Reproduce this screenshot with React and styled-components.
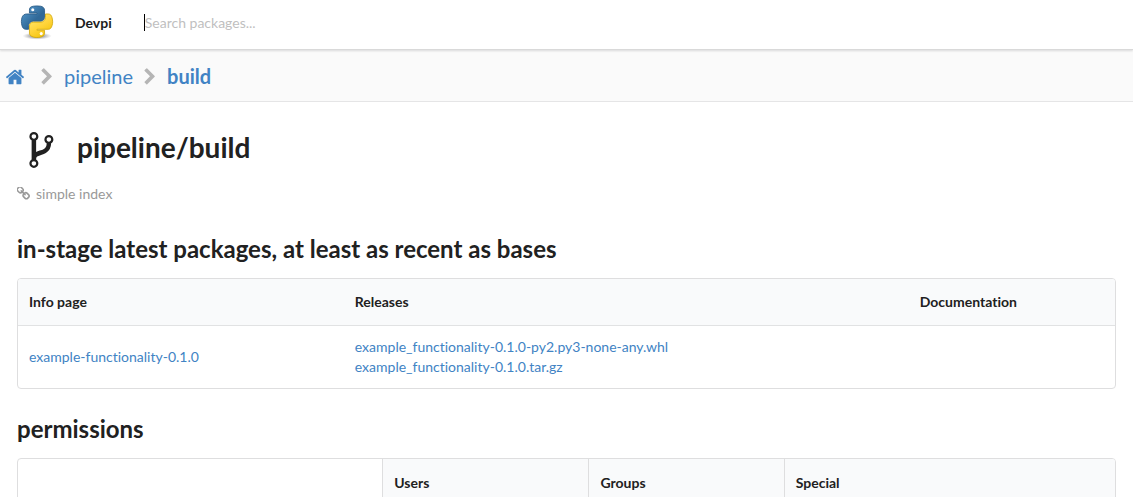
import React from "react";
import styled, { createGlobalStyle } from "styled-components";

const GlobalStyle = createGlobalStyle`
  *, *::before, *::after { box-sizing: border-box; }
  body {
    margin: 0;
    background: #fff;
    color: #212121;
    font-family: Lato, "Liberation Sans", sans-serif;
    font-size: 14px;
    line-height: 20px;
    font-variant-ligatures: none;
  }
  a { color: #4183c4; text-decoration: none; }
`;

const TopBar = styled.header`
  display: flex;
  align-items: center;
  height: 50px;
  padding: 0 20px 4px;
  border-bottom: 1px solid #d9d9d9;
  box-shadow: 0 1px 2px rgba(34, 36, 38, 0.15);
  position: relative;
`;

const Brand = styled.a`
  display: flex;
  align-items: center;
  gap: 21px;
  color: #1b1c1d;
  font-weight: 700;
`;

const Search = styled.form`
  display: flex;
  flex: 1;
  align-items: center;
  margin-left: 32px;
`;

const Caret = styled.span`
  width: 1px;
  height: 17px;
  background: #000;
`;

const SearchInput = styled.input`
  flex: 1;
  min-width: 0;
  padding: 0;
  border: 0;
  outline: 0;
  background: transparent;
  color: #212121;
  font: inherit;
  &::placeholder { color: #bfbfbf; opacity: 1; }
`;

const Breadcrumb = styled.nav`
  display: flex;
  align-items: center;
  height: 52px;
  padding: 0 5px;
  border-bottom: 1px solid #e5e5e6;
  background: #fafafa;
  font-size: 20px;
  line-height: 28px;
`;

const Crumb = styled.a`
  display: flex;
  font-weight: ${({ $current }) => ($current ? 700 : 400)};
`;

const Icon = styled.svg`
  display: block;
  flex: none;
  width: ${({ $size }) => $size}px;
  height: ${({ $size }) => $size}px;
  fill: ${({ $color }) => $color || "currentColor"};
`;

const Divider = styled.span`
  display: flex;
  padding-top: 2px;
  margin: 0 8px 0 ${({ $start }) => $start}px;
`;

const Content = styled.main`
  padding: 24px 17px;
`;

const PageTitle = styled.h1`
  display: flex;
  align-items: center;
  gap: 15px;
  margin: 0;
  padding-left: 3px;
  font-size: 28px;
  line-height: 42px;
`;

const IndexLink = styled.a`
  display: flex;
  align-items: center;
  gap: 4px;
  margin-top: 16px;
  color: #999;
`;

const SectionTitle = styled.h2`
  margin: ${({ $top }) => $top}px 0 14px;
  font-size: 24px;
  line-height: 30px;
`;

const Table = styled.table`
  width: 100%;
  table-layout: fixed;
  border: 1px solid #dededf;
  border-radius: 4px;
  border-collapse: separate;
  border-spacing: 0;
  overflow: hidden;
`;

const Col = styled.col`
  width: ${({ $width }) => $width};
`;

const HeadCell = styled.th`
  padding: 13px 11px;
  border-bottom: 1px solid #e1e2e3;
  background: #f9fafb;
  text-align: left;
  font-weight: 700;
`;

const GridHeadCell = styled(HeadCell)`
  padding-top: 14px;
  border-left: 1px solid #dededf;
`;

const BlankCell = styled.td`
  border-bottom: 1px solid #e1e2e3;
`;

const Cell = styled.td`
  padding: 11px;
  vertical-align: middle;
`;

const FileLink = styled.a`
  display: block;
`;

const HomeIcon = () => (
  <Icon $size={20} viewBox="0 -90 1792 1792" aria-hidden="true">
    <path d="M1472 992v480q0 26-19 45t-45 19h-384v-384h-256v384h-384q-26 0-45-19t-19-45v-480q0-1 .5-3t.5-3l575-474 575 474q1 2 1 6zm223-69l-62 74q-8 9-21 11h-3q-13 0-21-7l-692-577-692 577q-12 8-24 7-13-2-21-11l-62-74q-8-10-7-23.500t11-21.500l719-599q32-26 76-26t76 26l244 204v-195q0-14 9-23t23-9h192q14 0 23 9t9 23v408l219 182q10 8 11 21.500t-7 23.500z" />
  </Icon>
);

const ChevronIcon = () => (
  <Icon $size={18} $color="#b5b5b5" viewBox="0 0 1792 1792" aria-hidden="true">
    <path d="M1363 877l-742 742q-19 19-45 19t-45-19l-166-166q-19-19-19-45t19-45l531-531-531-531q-19-19-19-45t19-45l166-166q19-19 45-19t45 19l742 742q19 19 19 45t-19 45z" />
  </Icon>
);

const ForkIcon = () => (
  <Icon $size={42} viewBox="-16 -124 1792 1792" aria-hidden="true">
    <path d="M672 1472q0-40-28-68t-68-28-68 28-28 68 28 68 68 28 68-28 28-68zm0-1152q0-40-28-68t-68-28-68 28-28 68 28 68 68 28 68-28 28-68zm640 128q0-40-28-68t-68-28-68 28-28 68 28 68 68 28 68-28 28-68zm96 0q0 52-26 96.500t-70 69.500q-2 287-226 414-67 38-203 81-128 40-169.500 71t-41.500 100v26q44 25 70 69.500t26 96.500q0 80-56 136t-136 56-136-56-56-136q0-52 26-96.500t70-69.500v-820q-44-25-70-69.500t-26-96.500q0-80 56-136t136-56 136 56 56 136q0 52-26 96.500t-70 69.500v497q54-26 154-57 55-17 87.500-29.500t70.500-31 59-39.500 40.500-51 28-69.500 8.500-91.500q-44-25-70-69.500t-26-96.500q0-80 56-136t136-56 136 56 56 136z" />
  </Icon>
);

const LinkIcon = () => (
  <Icon $size={15} viewBox="160 140 1792 1792" aria-hidden="true">
    <path d="M1520 1216q0-40-28-68l-208-208q-28-28-68-28-42 0-72 32 3 3 19 18.500t21.500 21.500 15 19 13 25.500 3.500 27.500q0 40-28 68t-68 28q-15 0-27.500-3.500t-25.500-13-19-15-21.500-21.500-18.500-19q-33 31-33 73 0 40 28 68l206 207q27 27 68 27 40 0 68-26l147-146q28-28 28-67zm-703-705q0-40-28-68l-206-207q-28-28-68-28-39 0-68 27l-147 146q-28 28-28 67 0 40 28 68l208 208q27 27 68 27 42 0 72-31-3-3-19-18.500t-21.500-21.500-15-19-13-25.500-3.500-27.500q0-40 28-68t68-28q15 0 27.500 3.500t25.500 13 19 15 21.500 21.500 18.500 19q33-31 33-73zm895 705q0 120-85 203l-147 146q-83 83-203 83-121 0-204-85l-206-207q-83-83-83-203 0-123 88-209l-88-88q-86 88-208 88-120 0-204-84l-208-208q-84-84-84-204t85-203l147-146q83-83 203-83 121 0 204 85l206 207q83 83 83 203 0 123-88 209l88 88q86-88 208-88 120 0 204 84l208 208q84 84 84 204z" />
  </Icon>
);

const PythonLogo = () => (
  <svg width="34" height="35" viewBox="-5 -3 121 124" aria-hidden="true">
    <defs>
      <linearGradient id="blue" x1="0" y1="0" x2="1" y2="1">
        <stop offset="0" stopColor="#5a9fd4" />
        <stop offset="0.6" stopColor="#306998" />
      </linearGradient>
      <linearGradient id="yellow" x1="0.2" y1="0" x2="0.8" y2="1">
        <stop offset="0" stopColor="#ffe873" />
        <stop offset="0.5" stopColor="#ffd43b" />
        <stop offset="1" stopColor="#f0c000" />
      </linearGradient>
      <radialGradient id="shadow">
        <stop offset="0" stopColor="#444" stopOpacity="0.9" />
        <stop offset="0.5" stopColor="#777" stopOpacity="0.55" />
        <stop offset="1" stopColor="#999" stopOpacity="0" />
      </radialGradient>
    </defs>
    <ellipse cx="56" cy="107" rx="52" ry="13" fill="url(#shadow)" />
    <path
      fill="url(#blue)"
      stroke="#2a5a85"
      strokeWidth="3"
      d="M54.918 0.001c-4.589.021-8.971.413-12.827 1.095C30.732 3.103 28.669 7.303 28.669 15.05v10.232h26.845v3.411H18.595c-7.802 0-14.634 4.69-16.771 13.611-2.465 10.226-2.574 16.607 0 27.284 1.908 7.947 6.465 13.611 14.267 13.611h9.23V70.934c0-8.861 7.667-16.677 16.771-16.677h26.813c7.465 0 13.423-6.146 13.423-13.642V15.051c0-7.276-6.138-12.741-13.423-13.955C64.293.328 59.508-.02 54.918.001z"
    />
    <path
      fill="url(#yellow)"
      stroke="#d3a90c"
      strokeWidth="3"
      d="M85.675 28.693v11.921c0 9.243-7.836 17.022-16.771 17.022H42.091c-7.345 0-13.423 6.286-13.423 13.642v25.563c0 7.276 6.327 11.555 13.423 13.642 8.498 2.499 16.647 2.950 26.813 0 6.758-1.956 13.423-5.894 13.423-13.642V86.61H55.514v-3.411h40.236c7.802 0 10.709-5.442 13.423-13.611 2.803-8.410 2.683-16.498 0-27.284-1.928-7.767-5.611-13.611-13.423-13.611z"
    />
    <circle cx="40.400" cy="13.400" r="5.500" fill="#fff" />
    <circle cx="70.600" cy="98.500" r="5.500" fill="#fff" />
  </svg>
);

export default function App() {
  return (
    <>
      <GlobalStyle />
      <TopBar>
        <Brand href="#">
          <PythonLogo />
          Devpi
        </Brand>
        <Search role="search">
          <Caret />
          <SearchInput type="text" aria-label="Search packages" placeholder="Search packages..." />
        </Search>
      </TopBar>
      <Breadcrumb aria-label="Breadcrumb">
        <Crumb href="#" aria-label="Home"><HomeIcon /></Crumb>
        <Divider $start={13}><ChevronIcon /></Divider>
        <Crumb href="#">pipeline</Crumb>
        <Divider $start={8}><ChevronIcon /></Divider>
        <Crumb href="#" $current aria-current="page">build</Crumb>
      </Breadcrumb>
      <Content>
        <PageTitle>
          <ForkIcon />
          pipeline/build
        </PageTitle>
        <IndexLink href="#">
          <LinkIcon />
          simple index
        </IndexLink>
        <SectionTitle $top={30}>in-stage latest packages, at least as recent as bases</SectionTitle>
        <Table>
          <colgroup>
            <Col $width="29.700%" />
            <Col $width="51.500%" />
            <Col />
          </colgroup>
          <thead>
            <tr>
              <HeadCell scope="col">Info page</HeadCell>
              <HeadCell scope="col">Releases</HeadCell>
              <HeadCell scope="col">Documentation</HeadCell>
            </tr>
          </thead>
          <tbody>
            <tr>
              <Cell><a href="#">example-functionality-0.1.0</a></Cell>
              <Cell>
                <FileLink href="#">example_functionality-0.1.0-py2.py3-none-any.whl</FileLink>
                <FileLink href="#">example_functionality-0.1.0.tar.gz</FileLink>
              </Cell>
              <Cell />
            </tr>
          </tbody>
        </Table>
        <SectionTitle $top={25}>permissions</SectionTitle>
        <Table>
          <colgroup>
            <Col $width="33.200%" />
            <Col $width="18.800%" />
            <Col $width="17.800%" />
            <Col />
          </colgroup>
          <thead>
            <tr>
              <BlankCell />
              <GridHeadCell scope="col">Users</GridHeadCell>
              <GridHeadCell scope="col">Groups</GridHeadCell>
              <GridHeadCell scope="col">Special</GridHeadCell>
            </tr>
          </thead>
        </Table>
      </Content>
    </>
  );
}
